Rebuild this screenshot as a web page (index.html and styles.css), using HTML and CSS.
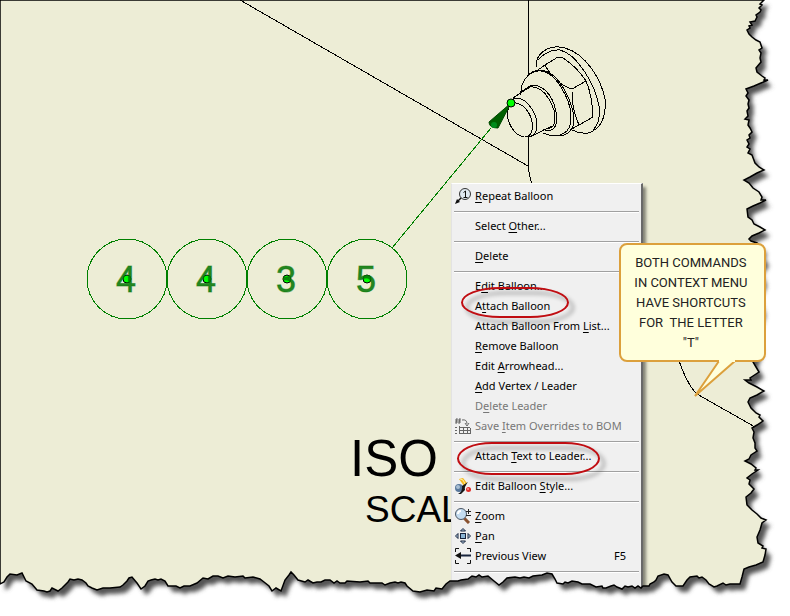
FILE: index.html
```html
<!DOCTYPE html>
<html lang="en">
<head>
<meta charset="utf-8">
<title>Balloon context menu</title>
<link rel="stylesheet" href="styles.css">
</head>
<body>
<main class="stage">
  <svg class="drawing" viewBox="0 0 790 616" role="img" aria-label="Drawing with balloons">
    <rect class="paper" width="790" height="616"/>
    <g class="ink">
      <path d="M240 0L528 166M528 0V74M528 137V166Q529 176 532 184M677 355Q687 385 697 394L755 427"/>
      <path d="M536 68C535 52 550 44 565 48C586 54 601 79 605 99C607 119 599 130 588 133Q580 134 572 130"/>
      <path d="M538 60Q548 49 560 50C577 54 595 84 599 106Q601 123 593 130"/>
      <path d="M535 72L545 65L558 57L563 58Q577 67 586 81L572 89Q555 84 545 65M586 81Q592 94 593 117L579 125L570 130M572 89Q571 107 579 125"/>
      <path d="M521 95C520 81 529 72 538 71C555 69 571 100 571 117C572 133 559 140 543 133"/>
      <path d="M527 76Q535 68 545 71C561 76 577 108 573 126Q571 134 560 136"/>
      <path d="M513 98L530 87C546 85 556 110 555 120Q555 127 548 129M521 92L530 86Q537 83 546 91C555 100 561 122 553 129Q548 132 543 129M530 137L552 126"/>
      <path d="M510 101Q519 94 528 104Q538 115 537 127Q536 137 527 137"/>
      <ellipse cx="520" cy="120" rx="11" ry="18" transform="rotate(-25 520 120)"/>
    </g>
    <g class="green">
      <path d="M392 248L491 128"/>
      <circle cx="127" cy="279" r="40"/><circle cx="207" cy="279" r="40"/><circle cx="287" cy="279" r="40"/><circle cx="367" cy="279" r="40"/>
    </g>
    <g class="grip">
      <circle cx="127" cy="279" r="4"/><circle cx="207" cy="279" r="4"/><circle cx="287" cy="279" r="4"/><circle cx="367" cy="279" r="4"/>
    </g>
    <g class="number">
      <text x="126" y="292">4</text><text x="206" y="292">4</text><text x="286" y="292">3</text><text x="366" y="292">5</text>
    </g>
    <path class="cone" d="M511 103L489 122Q489 128 498 128Z"/>
    <circle class="cone-base" cx="494" cy="125" r="3"/>
    <g class="grip"><circle cx="511" cy="103" r="4"/></g>
    <text class="view-name" x="350" y="476">ISO</text>
    <text class="view-scale" x="365" y="522">SCAL</text>
  </svg>

  <div class="menu" role="menu" aria-label="Balloon">
    <button role="menuitem"><svg viewBox="0 0 16 16"><circle cx="10" cy="6" r="5.500" fill="#dfe9f2" stroke="#333"/><path d="M8.500 4.500L10.500 3V9M8.500 9.500h4" fill="none" stroke="#111"/><path d="M0 16L2 11L5 14Z" fill="#111"/><path d="M2 14L6 10" stroke="#111" stroke-width="1.500"/></svg><span><u>R</u>epeat Balloon</span></button>
    <hr>
    <button role="menuitem"><i></i><span>Select <u>O</u>ther...</span></button>
    <hr>
    <button role="menuitem"><i></i><span><u>D</u>elete</span></button>
    <hr>
    <button role="menuitem"><i></i><span>E<u>d</u>it Balloon...</span></button>
    <button role="menuitem"><i></i><span>A<u>t</u>tach Balloon</span></button>
    <button role="menuitem"><i></i><span>Attach Balloon From <u>L</u>ist...</span></button>
    <button role="menuitem"><i></i><span><u>R</u>emove Balloon</span></button>
    <button role="menuitem"><i></i><span>Edit <u>A</u>rrowhead...</span></button>
    <button role="menuitem"><i></i><span><u>A</u>dd Vertex / Leader</span></button>
    <button role="menuitem" disabled><i></i><span>D<u>e</u>lete Leader</span></button>
    <button role="menuitem" disabled><svg viewBox="0 0 16 16"><g fill="none" stroke="#666"><path d="M2 0L1 6M5 0L4 6M0 2h6M0 4h6M7 2Q12 1 12 6M10 5l2 3l2-3M4.500 8v7M4 9.500h11M4 12.500h12M4 15.500h12M8.500 9v6M12.500 10v5M15.500 10v5"/><path d="M0 9.500h2M0 12.500h2M0 15.500h2"/></g></svg><span>Save <u>I</u>tem Overrides to BOM</span></button>
    <hr>
    <button role="menuitem"><i></i><span>Attach <u>T</u>ext to Leader...</span></button>
    <hr>
    <button role="menuitem"><svg viewBox="0 0 16 16"><circle cx="4" cy="10" r="4" fill="#58779b"/><circle cx="3" cy="9" r="2" fill="#a8bed3"/><path d="M4 1L8 0L12 5L9 8Z" fill="#f5b91e"/><path d="M5 1l3 1l2 4" fill="none" stroke="#fff0a0"/><path d="M3 16Q8 13 7 8L13 4Q9 9 10 12L6 16Z" fill="#151515"/><circle cx="13.500" cy="11.500" r="2.500" fill="#e02c28"/><circle cx="13" cy="11" r="1" fill="#ff9990"/></svg><span>Edit Balloon <u>S</u>tyle...</span></button>
    <hr>
    <button role="menuitem"><svg viewBox="0 0 16 16"><path d="M9 10L14 15" stroke="#8a5230" stroke-width="3"/><circle cx="6" cy="6" r="5.500" fill="#c4dcf0" stroke="#4b5664"/><path d="M3 6Q3 3 6 3" fill="none" stroke="#fff" stroke-width="2"/><path d="M11 3.500h5M13.500 1v5M11 7.500h5" stroke="#222"/></svg><span><u>Z</u>oom</span></button>
    <button role="menuitem"><svg viewBox="0 0 16 16"><rect x="5.500" y="5.500" width="5" height="5" fill="#8ab4d4" stroke="#17233c"/><path d="M5.500 3L8 .5L10.500 3ZM5.500 13L8 15.500L10.500 13ZM3 5.500L.5 8L3 10.500ZM13 5.500L15.500 8L13 10.500Z" fill="#b5d0e5" stroke="#17233c"/></svg><span><u>P</u>an</span></button>
    <button role="menuitem"><svg viewBox="0 0 16 16"><path d="M.5 4V.5H4M12 .5h3.500V4M.5 12v3.500H4M12 15.500h3.500V12" fill="none" stroke="#111"/><path d="M4 7.500H16" stroke="#17233c" stroke-width="2"/><path d="M0 7.500L6 4V11Z" fill="#111"/></svg><span>Previous View</span><kbd>F5</kbd></button>
    <hr>
  </div>
  <div class="ring ring-balloon"></div>
  <div class="ring ring-text"></div>

  <svg class="tear" viewBox="0 0 790 616" aria-hidden="true">
    <defs>
      <path id="edge" d="M0 0H764L760 4L762 5L759 8L761 10L760 12L756 15L757 17L755 21L750 22L752 25L749 26L750 28L747 30L749 34L752 37L756 40L760 42L762 48L759 50L761 53L760 58L761 62L756 68L757 72L762 76L765 78L764 80L768 80L761 83L754 86L746 89L748 93L746 96L749 100L748 104L749 108L747 111L748 116L745 119L749 120L748 125L750 128L752 132L749 135L750 138L747 140L749 144L747 147L750 149L748 153L752 155L755 163L759 167L764 170L757 173L750 177L744 180L749 183L753 188L759 192L762 197L761 200L766 200L760 203L753 206L747 209L748 217L752 220L754 224L760 227L765 230L759 233L752 236L749 239L751 241L757 243L762 248L760 253L764 260L758 269L762 280L756 294L761 310L754 330L758 348L753 362L756 367L759 372L753 376L750 378L751 380L745 380L749 383L757 387L764 391L757 395L750 398L748 402L751 408L756 413L760 415L759 417L763 421L757 425L752 428L754 432L753 438L755 443L755 448L757 451L751 455L749 459L745 461L751 464L756 468L755 470L758 470L752 474L747 478L750 480L749 484L754 489L751 493L746 497L747 505L752 510L757 514L761 518L766 520L762 523L760 530L757 537L758 543L763 546L762 548L766 549L765 555L763 562L756 565L749 567L744 569L742 577L740 584L730 584L726 585L723 583L717 586L714 587L709 584L706 580L702 577L699 578L697 576L690 577L687 580L683 586L676 586L672 582L668 575L664 574L658 576L656 580L654 582L650 584L649 586L643 586L641 588L638 586L635 588L632 586L628 587L625 586L622 589L617 587L614 585L611 586L606 588L603 588L602 586L596 587L590 584L582 584L578 582L572 581L568 583L565 582L563 584L557 583L555 579L552 574L547 573L542 575L533 576L529 578L524 577L520 578L515 577L507 578L503 582L499 585L494 581L488 576L482 577L479 575L476 577L472 576L468 579L461 580L458 581L450 581L446 584L442 589L436 588L434 591L427 590L420 592L413 591L407 586L405 583L401 582L398 583L395 582L390 583L385 585L382 583L370 583L368 581L360 582L347 581L345 583L340 583L337 581L334 583L330 580L325 580L321 582L317 582L313 583L308 580L305 582L298 580L294 575L291 572L289 575L285 580L281 591L276 588L272 591L269 586L264 582L260 579L253 577L245 578L243 576L235 577L228 576L223 578L218 576L213 576L208 579L203 578L197 583L190 586L184 586L180 588L176 586L168 586L165 581L161 579L158 580L155 579L151 580L148 581L145 586L141 589L137 583L132 577L129 578L127 581L123 585L120 587L110 588L103 588L97 590L92 588L88 586L86 583L82 580L78 579L74 580L70 579L68 582L62 588L58 591L56 590L52 588L50 591L47 592L44 591L37 590L32 584L26 581L22 573L17 575L10 574L7 577L4 582L0 584Z"/>
      <filter id="soft"><feGaussianBlur stdDeviation="2"/></filter>
      <mask id="away"><rect width="790" height="616" fill="#fff"/><use href="#edge" fill="#000"/></mask>
    </defs>
    <g mask="url(#away)">
      <rect width="790" height="616" fill="#fff"/>
      <use href="#edge" x="5" y="6" fill="#555" filter="url(#soft)"/>
    </g>
    <use href="#edge" fill="none" stroke="#000" stroke-width="1.500"/>
  </svg>

  <div class="callout">
    <p>BOTH COMMANDS<br>IN CONTEXT MENU<br>HAVE SHORTCUTS<br>FOR &nbsp;THE LETTER<br>"T"</p>
    <svg class="tail" viewBox="0 0 44 40" aria-hidden="true"><path d="M26 3L2 38L42 3" fill="#ffffdc" stroke="#dca03c" stroke-width="2"/><path d="M26 0H42V4H26Z" fill="#ffffdc"/></svg>
  </div>
</main>
</body>
</html>
```
FILE: styles.css
```css
* { box-sizing: border-box; }
body { margin: 0; background: #fff; font-family: "Noto Sans", "Open Sans", sans-serif; }
.stage { position: relative; width: 100%; overflow: hidden; }
.drawing { display: block; width: 100%; height: auto; }
.tear { position: absolute; inset: 0; width: 100%; height: auto; pointer-events: none; }
.paper { fill: #ededd6; }
.ink { fill: none; stroke: #000; shape-rendering: crispEdges; }
.green { fill: none; stroke: #008000; shape-rendering: crispEdges; }
.grip { fill: #0f0; stroke: #000; }
.number { fill: #087808; stroke: #087808; stroke-opacity: .5; font: 36px "Liberation Sans", Arial, sans-serif; text-anchor: middle; fill-opacity: .9; }
.cone { fill: #006000; stroke: #004800; }
.cone-base { fill: #008c1c; }
.view-name { font: 51px "Liberation Sans", Arial, sans-serif; }
.view-scale { font: 37px "Liberation Sans", Arial, sans-serif; }

.menu {
  position: absolute; left: 57.1%; top: 29.7%; width: 192px; padding: 2px 2px 40px;
  display: flex; flex-direction: column;
  background: #f0f0f0; border: 1px solid #fff; border-left-color: #e3e3e3; border-right: 2px solid #696969;
  box-shadow: 3px 4px 3px rgba(0, 0, 0, .45);
}
.menu button {
  display: flex; align-items: center; gap: 4px; height: 20px; padding: 0 13px 0 1px;
  border: 0; background: none; color: #000; font: 11px/18px "Noto Sans", "Open Sans", sans-serif; text-align: left; white-space: nowrap;
}
.menu button:disabled { color: #777; }
.menu svg, .menu i { width: 16px; height: 16px; flex: none; }
.menu span { flex: 1; }
.menu kbd { font: inherit; }
.menu u { text-underline-offset: 2px; }
.menu hr { width: 100%; margin: 5px 0 3px; height: 2px; border: 0; border-top: 1px solid #a0a0a0; background: #fff; }

.ring { position: absolute; border: 2px solid #c00d12; filter: drop-shadow(5px 5px 2px rgba(0, 0, 0, .4)); pointer-events: none; }
.ring-balloon { left: 58.3%; top: 46.6%; width: 108px; height: 31px; border-radius: 40px / 16px; }
.ring-text { left: 57.8%; top: 71.7%; width: 143px; height: 33px; border-radius: 36px / 17px; }

.callout {
  position: absolute; left: 78.4%; top: 39.4%; width: 147px; height: 119px; padding: 8px 4px 0 0;
  background: #ffffdc; border: 2px solid #dca03c; border-radius: 8px; text-align: center;
}
.callout p { margin: 0; color: #222; font: 13px/20px Roboto, "Liberation Sans", sans-serif; white-space: nowrap; }
.tail { position: absolute; left: 72px; top: 113px; width: 44px; height: 40px; }
```
